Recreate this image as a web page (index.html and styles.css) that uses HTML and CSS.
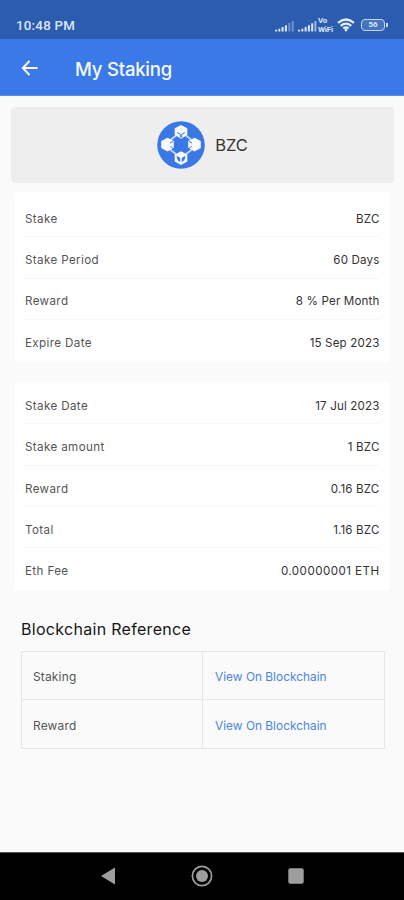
FILE: index.html
```html
<!DOCTYPE html>
<html lang="en">
<head>
<meta charset="utf-8">
<title>My Staking</title>
<link rel="stylesheet" href="styles.css">
</head>
<body>
<div class="status">
  <span class="clock">10:48 PM</span>
  <div class="indicators">
    <svg class="signal" width="20" height="12" viewBox="0 0 20 12"><path d="M1 11.500v-1.700M4.300 11.500V8.700M7.600 11.500V7M10.900 11.500V5.200"/><path class="dim" d="M14.300 11.500V3M17.700 11.500V1"/></svg>
    <svg class="signal second" width="20" height="12" viewBox="0 0 20 12"><path d="M1 11.500v-1.700M4.300 11.500V8.700M7.600 11.500V7M10.900 11.500V5.200M14.200 11.500V3.200"/><path class="mid" d="M17.400 11.500V1"/></svg>
    <div class="vowifi"><span>Vo</span><span>WiFi</span></div>
    <svg class="wifi" width="18" height="14" viewBox="0 0 18 14"><path d="M1 4.800Q9-1.800 17 4.800M3.700 7.800Q9 3.400 14.300 7.800M6.300 10.400Q9 8.200 11.700 10.400"/><circle cx="9" cy="12" r="1.400"/></svg>
    <div class="battery"><span>56</span></div>
  </div>
</div>
<header class="appbar">
  <svg width="18" height="18" viewBox="0 0 18 18"><path d="M16.500 9H2M8.500 2 1.800 9l6.700 7"/></svg>
  <h1>My Staking</h1>
</header>
<main>
  <section class="coin">
    <svg width="48" height="48" viewBox="0 0 48 48">
      <defs>
        <g id="cube"><path class="face" d="M0-6.700 6.300-3.400V3.400L0 7-6.300 3.400V-3.400Z"/></g>
      </defs>
      <circle class="disc" cx="24" cy="24" r="23.800"/>
      <path class="link" d="M19 14.500 13.500 19M29 14.500 34.500 19M13.500 29 19 33M34.500 29 29 33"/>
      <use href="#cube" x="24" y="10.700"/>
      <use href="#cube" x="10.500" y="23.500"/>
      <use href="#cube" x="37.500" y="23.500"/>
      <use href="#cube" x="24" y="37"/>
      <path class="cut" d="M20 11.500 23.300 13.300V16.500M28 11.500 24.700 13.300V16.500M13 22 16 20.500M13.500 25.500 17 28M35 22 32 20.500M34.500 25.500 31 28"/>
      <path class="eye" d="M19.700 34.800 23.200 37V41Q19.700 39.500 19.700 34.800ZM28.300 34.800 24.800 37V41Q28.300 39.500 28.300 34.800Z"/>
    </svg>
    <span>BZC</span>
  </section>
  <section class="card summary">
    <div class="row"><span>Stake</span><b>BZC</b></div>
    <div class="row"><span>Stake Period</span><b>60 Days</b></div>
    <div class="row"><span>Reward</span><b>8 % Per Month</b></div>
    <div class="row"><span>Expire Date</span><b>15 Sep 2023</b></div>
  </section>
  <section class="card details">
    <div class="row"><span>Stake Date</span><b>17 Jul 2023</b></div>
    <div class="row"><span>Stake amount</span><b>1 BZC</b></div>
    <div class="row"><span>Reward</span><b>0.16 BZC</b></div>
    <div class="row"><span>Total</span><b>1.16 BZC</b></div>
    <div class="row"><span>Eth Fee</span><b class="fee">0.00000001 ETH</b></div>
  </section>
  <h2>Blockchain Reference</h2>
  <div class="refs">
    <span>Staking</span><a>View On Blockchain</a>
    <span>Reward</span><a>View On Blockchain</a>
  </div>
</main>
<nav>
  <svg width="16" height="20" viewBox="0 0 16 20"><path d="M1 10 15 1.500v17Z"/></svg>
  <svg width="22" height="22" viewBox="0 0 22 22"><circle class="ring" cx="11" cy="11" r="9.600"/><circle cx="11" cy="11" r="6"/></svg>
  <svg width="16" height="16" viewBox="0 0 16 16"><rect x=".3" y=".3" width="15.400" height="15.400" rx="2"/></svg>
</nav>
</body>
</html>
```
FILE: styles.css
```css
* { box-sizing: border-box; }
body {
  margin: 0;
  height: 900px;
  display: flex;
  flex-direction: column;
  overflow: hidden;
  background: #fafafa;
  font-family: Inter, "Liberation Sans", sans-serif;
}
.status {
  height: 39px;
  padding: 11px 17px 0 16px;
  display: flex;
  justify-content: space-between;
  background: #2b5caf;
  color: #dce8fa;
}
.clock { font: 500 13.3px/29px Roboto, sans-serif; letter-spacing: .25px; }
.indicators { display: flex; height: 28px; align-items: center; }
.signal { fill: none; stroke: #dce8fa; stroke-width: 2; margin-top: 2px; }
.second { margin-left: 3px; }
.dim { stroke: #6d92ce; }
.mid { stroke: #9ab6e2; }
.vowifi { width: 17px; display: flex; flex-direction: column; font: 700 8px/9px Roboto, sans-serif; letter-spacing: -.2px; }
.wifi { fill: none; stroke: #e4eefc; stroke-width: 2.2; margin-left: 2px; }
.wifi circle { fill: #e4eefc; stroke: none; }
.battery {
  position: relative;
  width: 24px;
  height: 12px;
  margin: 0 2px 0 6px;
  border: 1.5px solid #c4d5f0;
  border-radius: 4px;
  background: #4674bd;
  text-align: center;
  font: 700 8px/10px Roboto, sans-serif;
}
.battery::after { content: ""; position: absolute; right: -3.5px; top: 2.5px; width: 2px; height: 4px; background: #c4d5f0; }
.appbar {
  height: 57px;
  padding: 0 21px;
  display: flex;
  align-items: center;
  gap: 36px;
  background: #3b79e8;
  border-bottom: 1px solid #5a8de8;
  color: #f7faff;
}
.appbar svg { fill: none; stroke: #f7faff; stroke-width: 2; margin-top: 1px; }
h1 { margin: 4px 0 0; font-size: 18.5px; font-weight: 500; letter-spacing: -.2px; }
main { flex: 1; padding: 11px 10px 0 11px; display: flex; flex-direction: column; }
.coin {
  height: 76px;
  display: flex;
  justify-content: center;
  align-items: center;
  gap: 10px;
  border-radius: 4px;
  background: #eee;
  color: #333;
  font-size: 16.5px;
}
.disc { fill: #3978e5; }
.face { fill: #f6faff; }
.link { stroke: #c4d9fb; stroke-width: 1.8; }
.cut { fill: none; stroke: #3978e5; stroke-width: 1; }
.eye { fill: #3978e5; }
.card { margin: 0 4px; padding: 0 11px 0 10px; background: #fff; border-radius: 3px; }
.summary { height: 170px; margin-top: 9px; padding-top: 4px; }
.details { height: 209px; margin-top: 20px; padding-top: 1px; }
.row {
  height: 41.3px;
  padding-top: 5px;
  display: flex;
  align-items: center;
  justify-content: space-between;
  border-bottom: 1px solid #f6f6f6;
  font-size: 11.6px;
  color: #555;
}
.details .row { padding-top: 6px; }
.row span { letter-spacing: .38px; }
.row:last-child { border-color: transparent; }
.row b { font-weight: 400; color: #333; letter-spacing: .15px; margin-right: -.5px; }
.row .fee { letter-spacing: .45px; }
h2 { margin: 26px 10px 0; font-size: 16px; line-height: 24px; font-weight: 400; letter-spacing: .3px; color: #161616; }
.refs {
  width: 364px;
  height: 98px;
  margin: 10px 0 0 10px;
  padding: 1px;
  display: grid;
  grid-template-columns: 180px 181px;
  gap: 1px;
  background: #e6e6e6;
}
.refs > * { padding: 1px 12px 0 11px; display: flex; align-items: center; background: #fafafa; color: #555; font-size: 11.9px; letter-spacing: .2px; }
.refs a { padding-left: 12px; color: #4a87da; letter-spacing: 0; }
.refs :nth-child(n+3) { padding-top: 2px; }
nav {
  height: 48px;
  padding: 0 100px 1px;
  display: flex;
  align-items: center;
  justify-content: space-between;
  background: #000;
  border-top: 1px solid #555;
}
nav svg { fill: #9e9e9e; }
.ring { fill: none; stroke: #9e9e9e; stroke-width: 1.7; }
```
